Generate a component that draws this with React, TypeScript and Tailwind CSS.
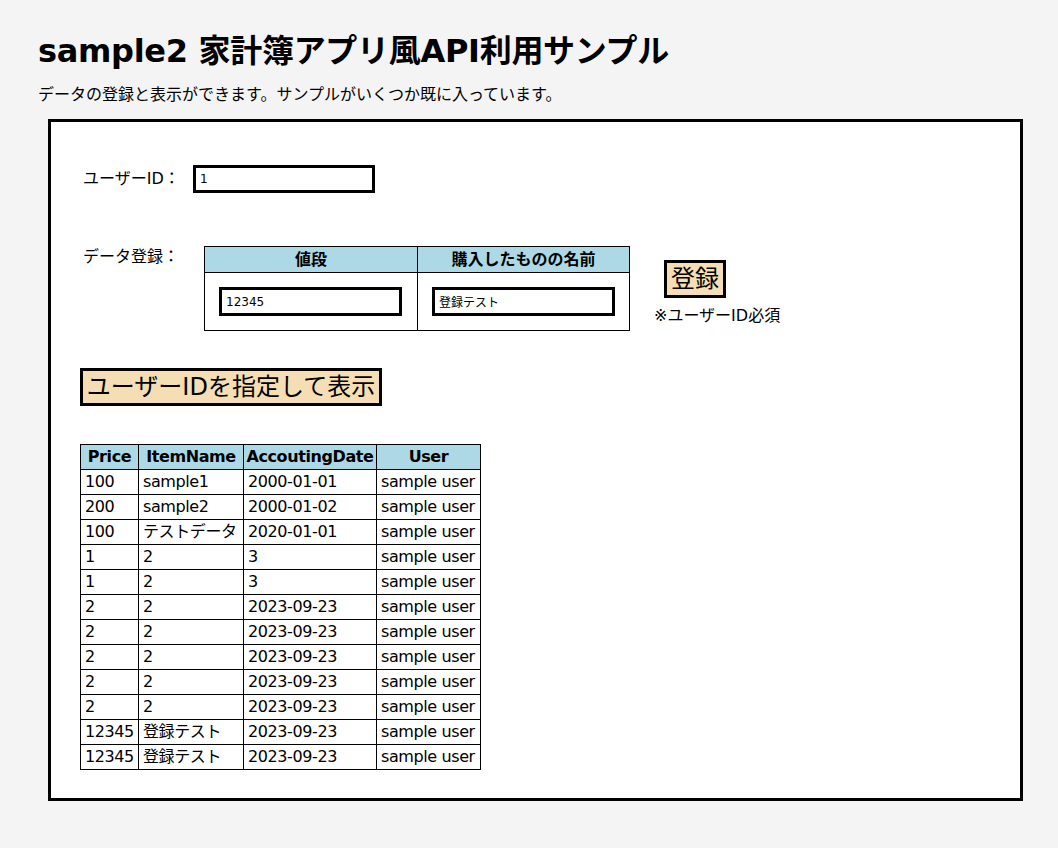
import React from 'react';

const rows: [string, string, string, string][] = [
  ['100', 'sample1', '2000-01-01', 'sample user'],
  ['200', 'sample2', '2000-01-02', 'sample user'],
  ['100', 'テストデータ', '2020-01-01', 'sample user'],
  ['1', '2', '3', 'sample user'],
  ['1', '2', '3', 'sample user'],
  ['2', '2', '2023-09-23', 'sample user'],
  ['2', '2', '2023-09-23', 'sample user'],
  ['2', '2', '2023-09-23', 'sample user'],
  ['2', '2', '2023-09-23', 'sample user'],
  ['2', '2', '2023-09-23', 'sample user'],
  ['12345', '登録テスト', '2023-09-23', 'sample user'],
  ['12345', '登録テスト', '2023-09-23', 'sample user'],
];

const font = "font-['DejaVu_Sans','Noto_Sans_CJK_JP',sans-serif]";

export default function App() {
  return (
    <div className={`min-h-[848px] bg-[#f4f4f4] text-black ${font}`}>
      <div className="pl-[38px] pt-[31px]">
        <h1 className="text-[32px] leading-[40px] font-bold tracking-[-0.3px]">sample2 家計簿アプリ風API利用サンプル</h1>
        <p className="mt-[12px] text-[16px] leading-[24px]">データの登録と表示ができます。サンプルがいくつか既に入っています。</p>
      </div>

      {/* メインボックス */}
      <div className="ml-[48px] mt-[12px] w-[975px] h-[682px] border-[3px] border-black bg-white pl-[29px] pt-[43px]">
        <div className="flex items-center">
          <span className="pl-[3px] w-[113px] text-[16px]">ユーザーID：</span>
          <input
            defaultValue="1"
            className="w-[182px] h-[28px] border-[3px] border-black px-[4px] text-[12px] outline-none"
          />
        </div>

        <div className="flex items-start mt-[53px]">
          <span className="pl-[3px] w-[124px] pt-[1px] text-[16px] leading-[20px]">データ登録：</span>
          <table className="border-collapse">
            <thead>
              <tr className="bg-[#add8e6]">
                <th className="w-[213px] h-[26px] border border-black text-[16px] font-bold">値段</th>
                <th className="w-[212px] h-[26px] border border-black text-[16px] font-bold">購入したものの名前</th>
              </tr>
            </thead>
            <tbody>
              <tr>
                <td className="h-[58px] border border-black px-[14px]">
                  <input
                    defaultValue="12345"
                    className="w-[183px] h-[29px] border-[3px] border-black px-[4px] text-[12px] outline-none"
                  />
                </td>
                <td className="h-[58px] border border-black px-[14px]">
                  <input
                    defaultValue="登録テスト"
                    className="w-[183px] h-[29px] border-[3px] border-black px-[4px] text-[12px] outline-none"
                  />
                </td>
              </tr>
            </tbody>
          </table>
          <div className="ml-[24px] mt-[14px] flex flex-col">
            <button className="ml-[10px] w-[62px] h-[38px] border-[3px] border-black bg-[#f5deb3] text-[24px] leading-none">登録</button>
            <span className="mt-[8px] text-[16px] leading-[20px]">※ユーザーID必須</span>
          </div>
        </div>

        <button className="mt-[37px] h-[38px] w-[302px] border-[3px] border-black bg-[#f5deb3] text-[24px] leading-none whitespace-nowrap">
          ユーザーIDを指定して表示
        </button>

        <table className="mt-[38px] border-collapse text-[16px] tracking-[-0.4px]">
          <thead>
            <tr className="bg-[#add8e6]">
              <th className="w-[58px] h-[25px] border border-black font-bold">Price</th>
              <th className="w-[105px] h-[25px] border border-black font-bold">ItemName</th>
              <th className="w-[133px] h-[25px] border border-black font-bold whitespace-nowrap">AccoutingDate</th>
              <th className="w-[104px] h-[25px] border border-black font-bold">User</th>
            </tr>
          </thead>
          <tbody>
            {rows.map((r, i) => (
              <tr key={i}>
                {r.map((c, j) => (
                  <td key={j} className="h-[25px] border border-black px-[4px] whitespace-nowrap leading-none">{c}</td>
                ))}
              </tr>
            ))}
          </tbody>
        </table>
      </div>
    </div>
  );
}
